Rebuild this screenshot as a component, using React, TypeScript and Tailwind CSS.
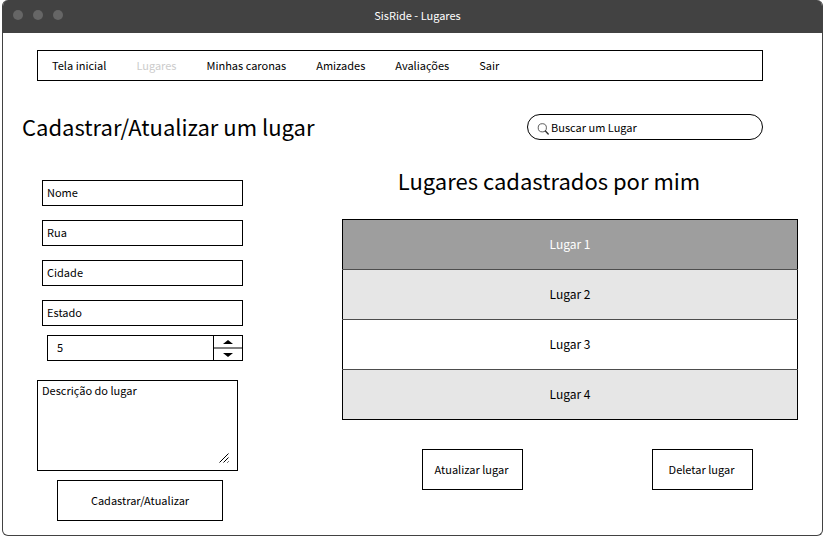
import { useState } from "react";

const navItems = ["Tela inicial", "Lugares", "Minhas caronas", "Amizades", "Avaliações", "Sair"];

const fields = [
  { id: "nome", label: "Nome" },
  { id: "rua", label: "Rua" },
  { id: "cidade", label: "Cidade" },
  { id: "estado", label: "Estado" },
];

const places = ["Lugar 1", "Lugar 2", "Lugar 3", "Lugar 4"];

function TitleBar() {
  return (
    <header className="grid h-[33px] grid-cols-[1fr_auto_1fr] items-center bg-[#424242] px-[10px] pb-[3px] text-white">
      <div className="flex gap-[10px]">
        <span className="size-[10px] rounded-full bg-[#666666]" />
        <span className="size-[10px] rounded-full bg-[#666666]" />
        <span className="size-[10px] rounded-full bg-[#666666]" />
      </div>
      <h1 className="pl-[10px]">SisRide - Lugares</h1>
    </header>
  );
}

function NavBar() {
  return (
    <nav className="mt-[17px] mr-[59px] ml-[34px] flex h-[31px] items-center gap-[30px] border border-black px-[14px] pb-[2px]">
      {navItems.map((item) => (
        <a key={item} href="#" className={item === "Lugares" ? "text-[#cccccc]" : "text-black"}>
          {item}
        </a>
      ))}
    </nav>
  );
}

function SearchBox() {
  return (
    <label className="flex h-[26px] w-[236px] items-center gap-[2px] rounded-full border border-black px-[9px]">
      <svg viewBox="0 0 12 12" className="mt-[3px] size-3 shrink-0" fill="none" stroke="#333333">
        <circle cx="5.3" cy="4.8" r="4.1" strokeWidth="0.8" />
        <path d="M8.4 8L11.2 11" strokeWidth="1.4" strokeLinecap="round" />
      </svg>
      <input
        type="search"
        aria-label="Buscar um Lugar"
        placeholder="Buscar um Lugar"
        className="w-full min-w-0 pb-px outline-none placeholder:text-black"
      />
    </label>
  );
}

function NumberField() {
  const [value, setValue] = useState(5);
  return (
    <div className="mt-[9px] ml-[10px] flex h-[26px] w-[196px] border border-black">
      <input
        type="number"
        aria-label="Número"
        value={value}
        onChange={(e) => setValue(Number(e.target.value))}
        className="w-full min-w-0 appearance-none pb-[2px] pl-[9px] outline-none [-moz-appearance:textfield] [&::-webkit-inner-spin-button]:appearance-none"
      />
      <div className="flex w-[29px] shrink-0 flex-col border-l border-black">
        <button
          type="button"
          aria-label="Aumentar"
          onClick={() => setValue(value + 1)}
          className="flex flex-1 items-center justify-center border-b-2 border-[#808080]"
        >
          <svg viewBox="0 0 10 4" className="h-1 w-[10px]">
            <path d="M0 4L5 0L10 4Z" />
          </svg>
        </button>
        <button
          type="button"
          aria-label="Diminuir"
          onClick={() => setValue(value - 1)}
          className="flex flex-1 items-center justify-center"
        >
          <svg viewBox="0 0 10 4" className="h-1 w-[10px]">
            <path d="M0 0L5 4L10 0Z" />
          </svg>
        </button>
      </div>
    </div>
  );
}

function PlaceForm() {
  return (
    <form className="flex w-[206px] shrink-0 flex-col">
      <div className="flex flex-col gap-[14px] pl-[5px]">
        {fields.map((field) => (
          <input
            key={field.id}
            id={field.id}
            type="text"
            aria-label={field.label}
            placeholder={field.label}
            className="h-[26px] border border-black px-1 pb-[2px] outline-none placeholder:text-black"
          />
        ))}
      </div>
      <NumberField />
      <div className="relative mt-[19px] mr-[5px] flex h-[91px]">
        <textarea
          aria-label="Descrição do lugar"
          placeholder="Descrição do lugar"
          className="w-full resize-none border border-black px-1 py-px outline-none placeholder:text-black"
        />
        <svg
          viewBox="0 0 10 10"
          className="absolute right-[9px] bottom-2 size-[10px]"
          fill="none"
          stroke="#000000"
        >
          <path d="M0.5 9.5L9.5 0.5M4.5 9.5L9.5 4.5M8.5 9.5L9.5 8.5" />
        </svg>
      </div>
      <button type="submit" className="mt-[9px] mr-5 ml-5 h-[41px] border border-black pb-[2px]">
        Cadastrar/Atualizar
      </button>
    </form>
  );
}

function PlaceList() {
  const [selected, setSelected] = useState(0);
  return (
    <section className="mr-6 ml-[99px] flex-1">
      <h2 className="-mt-4 mr-[42px] text-center text-[22px] leading-8">Lugares cadastrados por mim</h2>
      <table className="mt-[23px] w-full border-collapse border border-black text-center text-[12px]">
        <tbody>
          {places.map((place, i) => (
            <tr
              key={place}
              onClick={() => setSelected(i)}
              className={
                i === selected
                  ? "h-[50px] bg-[#9e9e9e] text-white"
                  : i % 2 === 1
                    ? "h-[50px] border-t border-[#4d4d4d] bg-[#e6e6e6]"
                    : "h-[50px] border-t border-[#4d4d4d] bg-white"
              }
            >
              <td className="pb-[2px]">{place}</td>
            </tr>
          ))}
        </tbody>
      </table>
      <div className="mt-[29px] mr-[45px] ml-20 flex justify-between">
        <button type="button" className="h-[41px] w-[101px] border border-black pr-[2px] pb-[2px]">
          Atualizar lugar
        </button>
        <button type="button" className="h-[41px] w-[101px] border border-black pr-[2px] pb-[2px]">
          Deletar lugar
        </button>
      </div>
    </section>
  );
}

export default function App() {
  return (
    <div className="bg-white pr-[10px] pl-[2px] font-['Noto_Sans_CJK_SC','Noto_Sans',sans-serif] text-[11px] leading-4 text-black">
      <div className="overflow-hidden rounded-md border border-t-0 border-[#424242] pb-[14px]">
        <TitleBar />
        <NavBar />
        <div className="mt-[29px] mr-[59px] ml-[19px] flex items-center justify-between">
          <h2 className="pb-[2px] text-[22px] leading-8">Cadastrar/Atualizar um lugar</h2>
          <SearchBox />
        </div>
        <main className="mt-9 flex pl-[34px]">
          <PlaceForm />
          <PlaceList />
        </main>
      </div>
    </div>
  );
}
